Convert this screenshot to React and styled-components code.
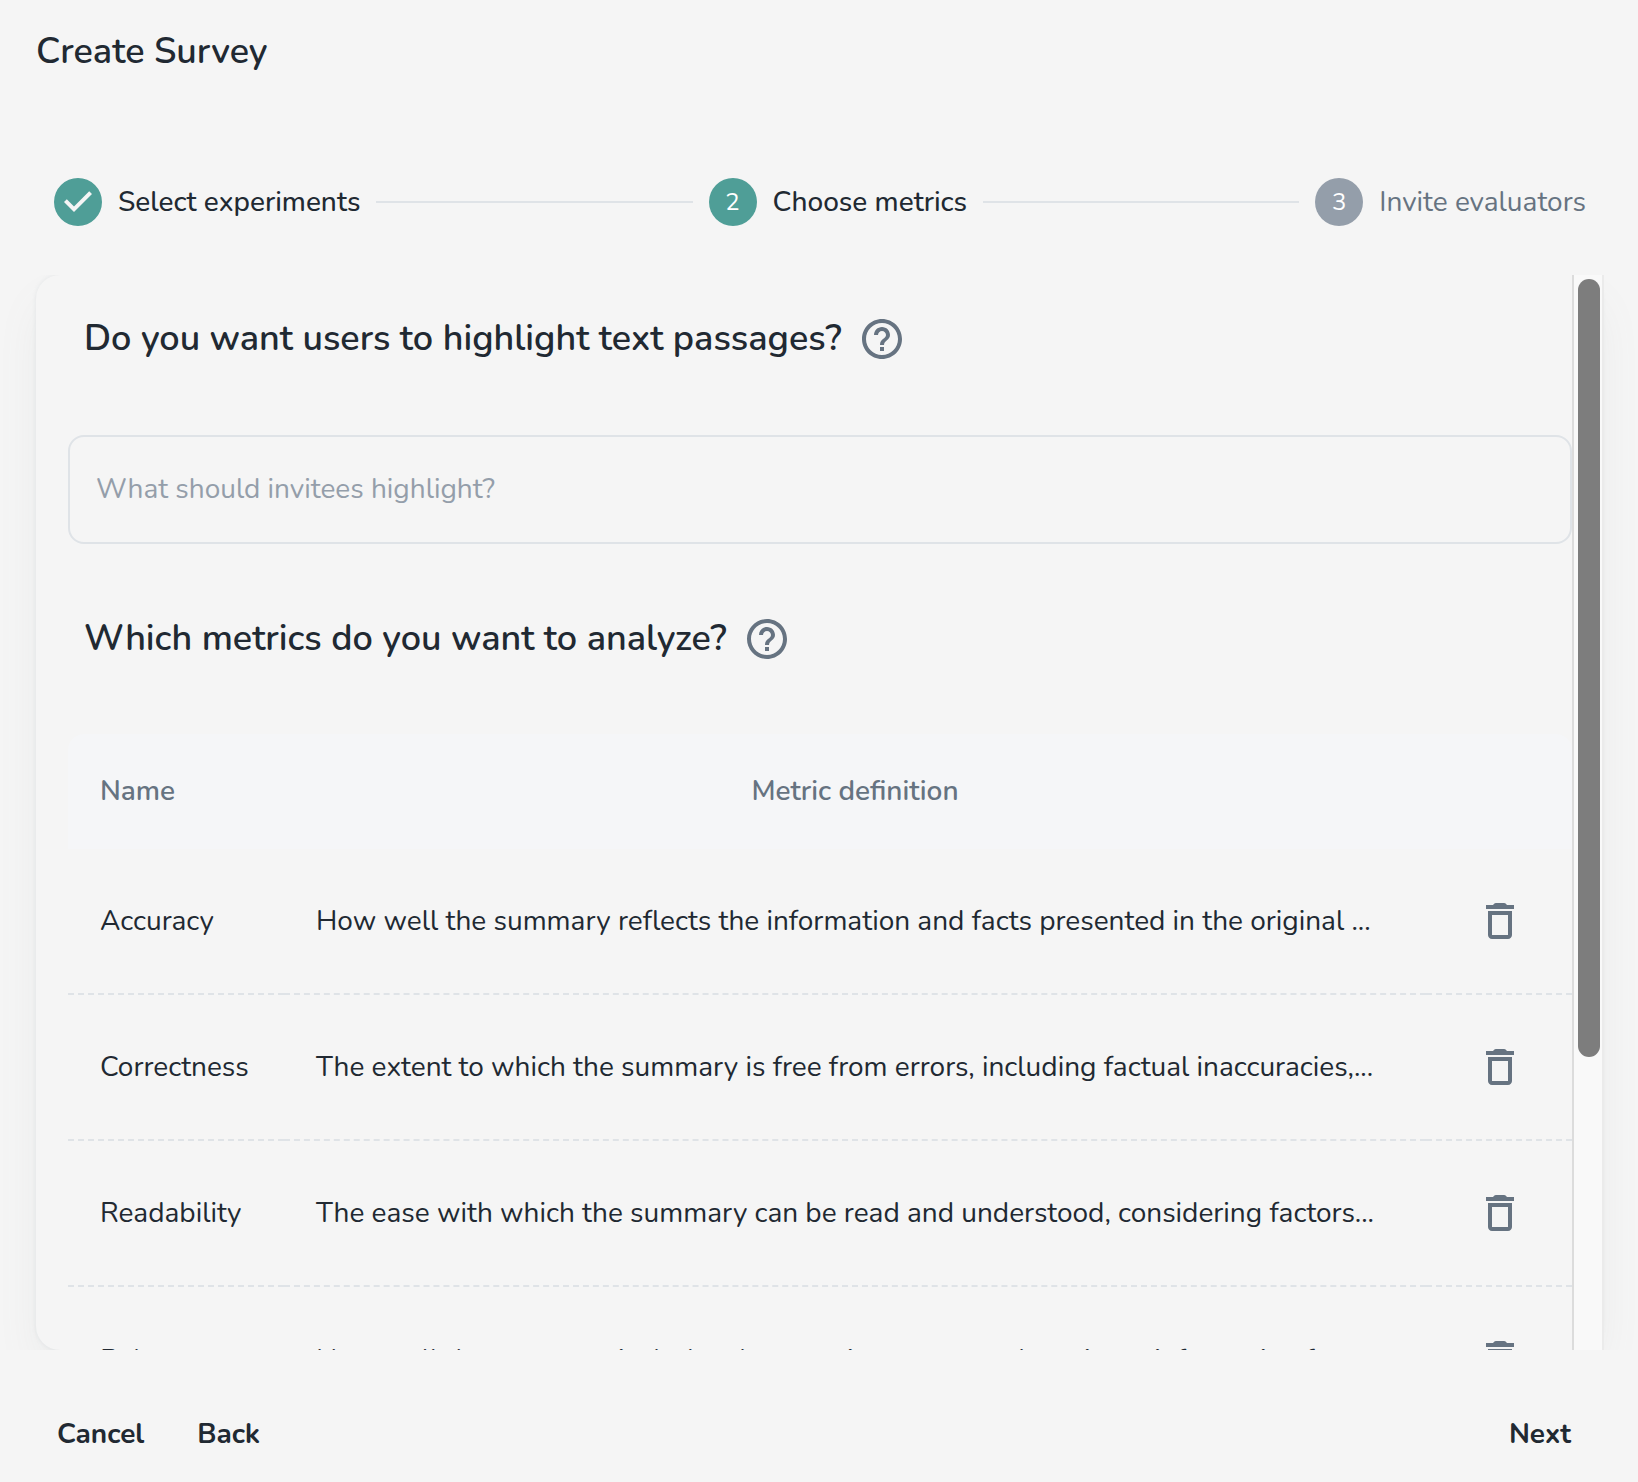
import React from "react";
import styled, { createGlobalStyle } from "styled-components";

const colors = {
  page: "#f5f5f5",
  text: "#212932",
  muted: "#667381",
  disabled: "#949eaa",
  line: "#dfe3e7",
  primary: "#4f9e97",
  head: "#f5f6f8",
};

const GlobalStyle = createGlobalStyle`
  *, *::before, *::after { box-sizing: border-box; }
  body {
    margin: 0;
    background: ${colors.page};
    color: ${colors.text};
    font-family: Nunito, Lato, "Open Sans", sans-serif;
    font-size: 28px;
    line-height: 44px;
  }
`;

const Page = styled.main`
  display: flex;
  flex-direction: column;
  width: 1638px;
  height: 1482px;
  overflow: hidden;
`;

const Title = styled.h1`
  margin: 0;
  padding: 0 36px;
  font-size: 36px;
  font-weight: 600;
  line-height: 104px;
`;

const Stepper = styled.ol`
  display: flex;
  align-items: center;
  gap: 16px;
  list-style: none;
  margin: 74px 52px 49px 54px;
  padding: 0;
  height: 48px;
`;

const Step = styled.li`
  display: flex;
  align-items: center;
  gap: 16px;
  flex: none;
`;

const StepBadge = styled.span`
  display: flex;
  align-items: center;
  justify-content: center;
  width: 48px;
  height: 48px;
  border-radius: 50%;
  background: ${(p) => (p.$active ? colors.primary : colors.disabled)};
  color: #fff;
  font-size: 24px;
`;

const StepLabel = styled.span`
  white-space: nowrap;
  color: ${(p) => (p.$active ? colors.text : colors.muted)};
  font-weight: ${(p) => (p.$active ? 500 : 400)};
`;

const Connector = styled.li`
  flex: 1;
  height: 2px;
  background: ${colors.line};
`;

const Viewport = styled.section`
  height: 1075px;
  flex: none;
  padding: 0 36px;
  overflow: hidden;
`;

const Card = styled.div`
  display: flex;
  height: 100%;
  border-radius: 24px;
  background: ${colors.page};
  box-shadow:
    0 0 4px 0 rgba(145, 158, 171, 0.16),
    0 24px 48px -8px rgba(130, 134, 140, 0.11);
`;

const Content = styled.div`
  flex: 1;
  min-width: 0;
  padding: 40px 0 0 32px;
  overflow: hidden;
`;

const Scrollbar = styled.div`
  flex: none;
  width: 32px;
  margin-right: -2px;
  padding: 4px 2px 0 4px;
  border-left: 2px solid #dcdcdc;
  border-right: 2px solid #ebebeb;
  background: #f9f9f9;
`;

const Thumb = styled.div`
  width: 22px;
  height: 778px;
  border-radius: 11px;
  background: #7d7d7d;
`;

const Question = styled.div`
  display: flex;
  align-items: center;
  gap: 16px;
  height: 48px;
  padding-left: 16px;
`;

const QuestionText = styled.h2`
  margin: 0;
  font-size: 36px;
  font-weight: 600;
  white-space: nowrap;
`;

const Icon = styled.svg`
  display: block;
  flex: none;
  width: 48px;
  height: 48px;
  fill: ${(p) => p.$color || colors.muted};
`;

const HighlightInput = styled.input`
  display: block;
  width: 100%;
  height: 109px;
  margin: 72px 0 71px;
  padding: 0 26px 1px;
  border: 2px solid ${colors.line};
  border-radius: 16px;
  outline: 0;
  background: transparent;
  color: ${colors.text};
  font: inherit;

  &::placeholder {
    color: ${colors.disabled};
    opacity: 1;
  }
`;

const Table = styled.div`
  margin-top: 71px;
`;

const Row = styled.div`
  display: grid;
  grid-template-columns: 216px minmax(0, 1fr) 146px;
`;

const HeadRow = styled(Row)`
  height: 115px;
  border-radius: 16px 16px 0 0;
  background: ${colors.head};
  color: ${colors.muted};
  font-weight: 600;
`;

const HeadCell = styled.div`
  display: flex;
  align-items: center;
  justify-content: ${(p) => (p.$center ? "center" : "flex-start")};
  padding: 0 32px 1px;
`;

const Cell = styled.div`
  display: flex;
  align-items: center;
  height: 146px;
  padding: 0 32px;
  border-bottom: 2px dashed ${colors.line};
`;

const ActionCell = styled(Cell)`
  justify-content: flex-end;
`;

const CellText = styled.span`
  white-space: nowrap;

  ${Row}:last-child & {
    padding-top: 2px;
  }
`;

const IconButton = styled.button`
  padding: 16px;
  border: 0;
  background: none;
`;

const Footer = styled.footer`
  display: flex;
  align-items: center;
  gap: 53px;
  flex: 1;
  padding: 35px 67px 0 57px;
`;

const TextButton = styled.button`
  margin-left: ${(p) => (p.$end ? "auto" : "0")};
  padding: 0;
  border: 0;
  background: none;
  color: ${colors.text};
  font: inherit;
  font-weight: 700;
`;

const HelpIcon = () => (
  <Icon viewBox="0 0 24 24">
    <path d="M11 18h2v-2h-2v2zm1-16C6.48 2 2 6.48 2 12s4.48 10 10 10 10-4.48 10-10S17.52 2 12 2zm0 18c-4.41 0-8-3.59-8-8s3.59-8 8-8 8 3.59 8 8-3.59 8-8 8zm0-14c-2.21 0-4 1.79-4 4h2c0-1.1.9-2 2-2s2 .9 2 2c0 2-3 1.75-3 5h2c0-2.25 3-2.5 3-5 0-2.21-1.79-4-4-4z" />
  </Icon>
);

const TrashIcon = () => (
  <Icon viewBox="0 0 24 24">
    <path d="M6 19c0 1.1.9 2 2 2h8c1.1 0 2-.9 2-2V7H6v12zM8 9h8v10H8V9zm7.5-5-.7-.7c-.2-.2-.45-.3-.7-.3H9.9c-.25 0-.5.1-.7.3L8.5 4H5v2h14V4z" />
  </Icon>
);

const CheckCircle = () => (
  <Icon viewBox="0 0 24 24" $color={colors.primary}>
    <path d="M12 0a12 12 0 1 0 0 24 12 12 0 0 0 0-24zm-2 17l-5-5 1.4-1.4 3.6 3.6 7.6-7.6L19 8l-9 9z" />
  </Icon>
);

const metrics = [
  {
    name: "Accuracy",
    definition:
      "How well the summary reflects the information and facts presented in the original ...",
  },
  {
    name: "Correctness",
    definition:
      "The extent to which the summary is free from errors, including factual inaccuracies,...",
  },
  {
    name: "Readability",
    definition:
      "The ease with which the summary can be read and understood, considering factors...",
  },
  {
    name: "Relevance",
    definition:
      "How well the summary includes the most important and pertinent information from...",
  },
];

export default function App() {
  return (
    <Page>
      <GlobalStyle />
      <Title>Create Survey</Title>

      <Stepper>
        <Step>
          <CheckCircle />
          <StepLabel $active>Select experiments</StepLabel>
        </Step>
        <Connector />
        <Step>
          <StepBadge $active>2</StepBadge>
          <StepLabel $active>Choose metrics</StepLabel>
        </Step>
        <Connector />
        <Step>
          <StepBadge>3</StepBadge>
          <StepLabel>Invite evaluators</StepLabel>
        </Step>
      </Stepper>

      <Viewport>
        <Card>
          <Content>
            <Question>
              <QuestionText>
                Do you want users to highlight text passages?
              </QuestionText>
              <HelpIcon />
            </Question>
            <HighlightInput placeholder="What should invitees highlight?" />
            <Question>
              <QuestionText>Which metrics do you want to analyze?</QuestionText>
              <HelpIcon />
            </Question>

            <Table>
              <HeadRow>
                <HeadCell>Name</HeadCell>
                <HeadCell $center>Metric definition</HeadCell>
                <HeadCell />
              </HeadRow>
              {metrics.map((m) => (
                <Row key={m.name}>
                  <Cell>
                    <CellText>{m.name}</CellText>
                  </Cell>
                  <Cell>
                    <CellText>{m.definition}</CellText>
                  </Cell>
                  <ActionCell>
                    <IconButton aria-label={`Delete ${m.name}`}>
                      <TrashIcon />
                    </IconButton>
                  </ActionCell>
                </Row>
              ))}
            </Table>
          </Content>
          <Scrollbar>
            <Thumb />
          </Scrollbar>
        </Card>
      </Viewport>

      <Footer>
        <TextButton>Cancel</TextButton>
        <TextButton>Back</TextButton>
        <TextButton $end>Next</TextButton>
      </Footer>
    </Page>
  );
}
